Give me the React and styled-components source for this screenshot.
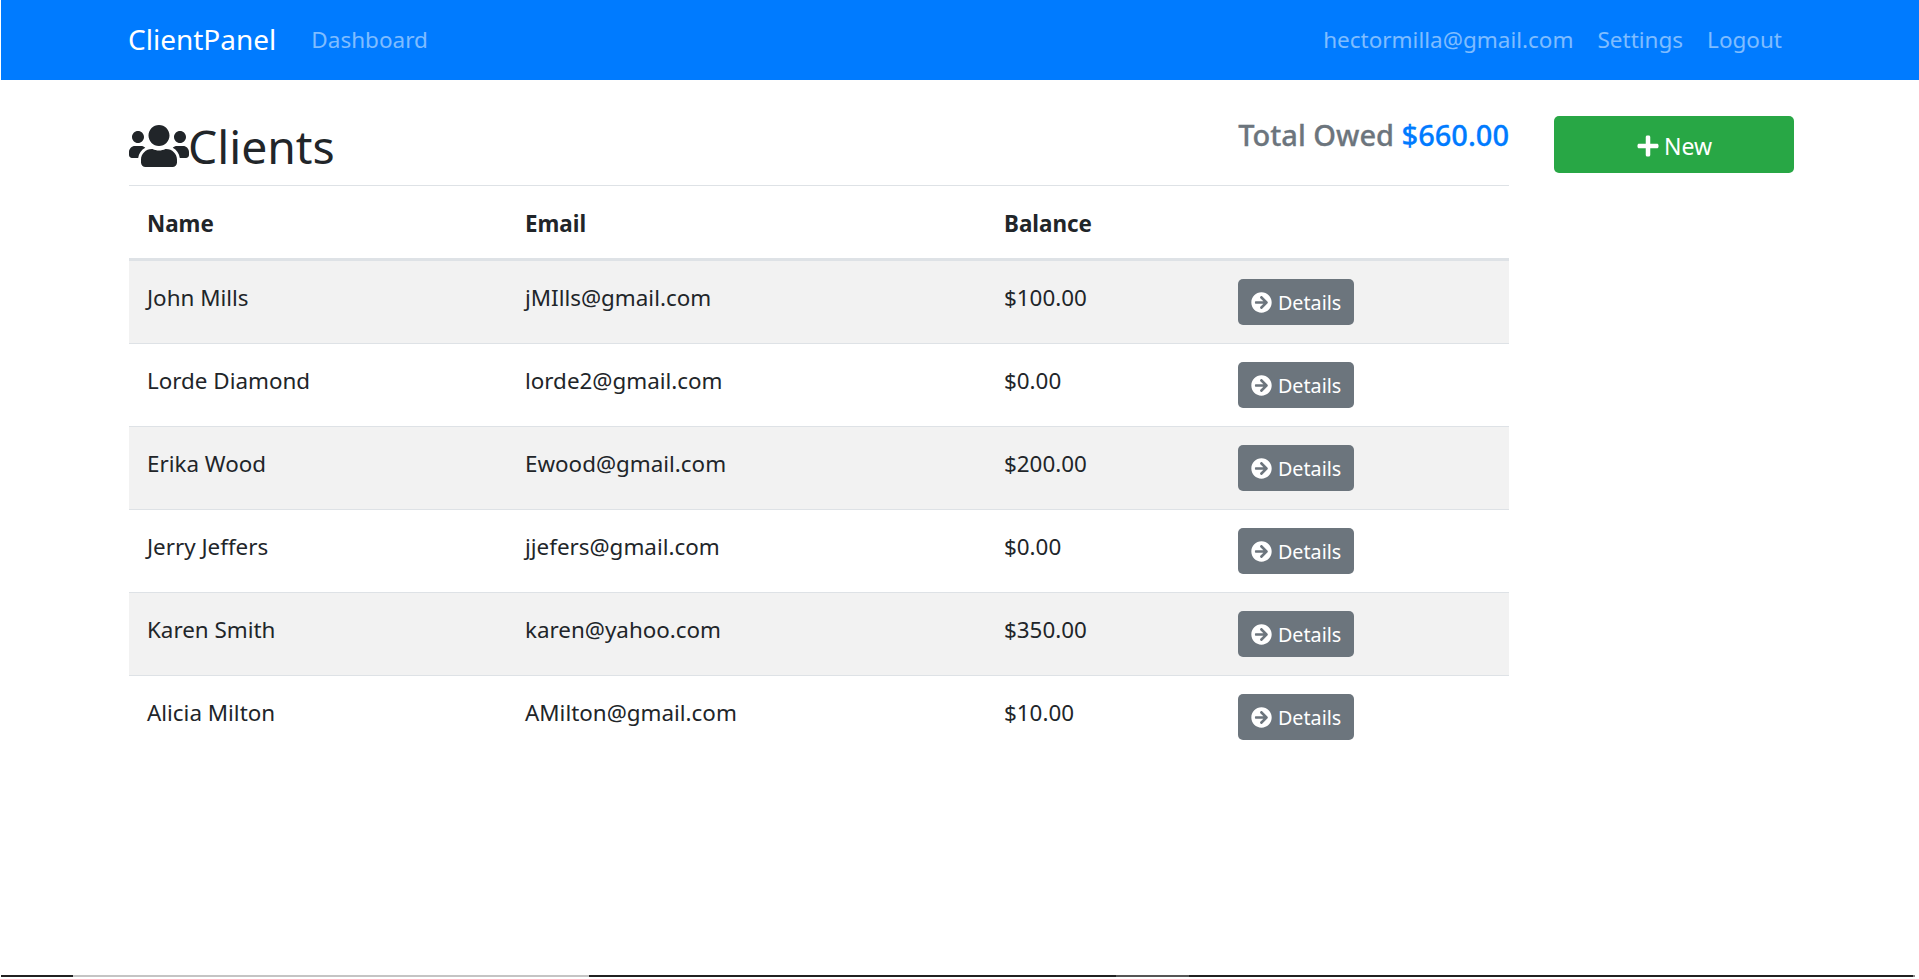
import React from 'react';
import styled, { createGlobalStyle } from 'styled-components';
import { FaUsers, FaPlus, FaArrowCircleRight } from 'react-icons/fa';

const GlobalStyle = createGlobalStyle`
    html, body {
        margin: 0;
        padding: 0;
        background: #fff;
    }
    body {
        font-family: "Noto Sans", "Open Sans", sans-serif;
        font-size: 20px;
        color: #212529;
        height: 979px;
        overflow: hidden;
    }
`

const Page = styled.div`
    display: flex;
    flex-direction: column;
    height: 979px;
`

const Nav = styled.nav`
    display: flex;
    align-items: center;
    height: 78px;
    margin-left: 1px;
    padding: 0 129px 2px 127px;
    background-color: #007bff;
`

const Brand = styled.a`
    color: #fff;
    font-size: 28px;
    margin-right: 35px;
`

const NavLink = styled.a`
    color: rgba(255, 255, 255, 0.5);
    font-size: 22.5px;
    margin-right: ${props => props.$gap || 0}px;
`

const Spacer = styled.div`
    flex: 1;
`

const Main = styled.main`
    flex: 1;
    display: flex;
    align-items: flex-start;
    padding: 0 125px 0 129px;
`

const Content = styled.div`
    width: 1380px;
    padding-top: 36px;
`

const Header = styled.div`
    display: flex;
    justify-content: space-between;
    height: 69px;
`

const Title = styled.h2`
    display: flex;
    align-items: center;
    margin: 0;
    height: 60px;
    font-size: 46.3px;
    font-weight: 400;
    svg {
        width: 60px;
        height: 48px;
        margin-right: -1px;
    }
`

const Total = styled.h5`
    margin: 0;
    font-size: 29px;
    font-weight: 500;
    -webkit-text-stroke: 0.3px currentColor;
    color: #6c757d;
    line-height: 38px;
`

const Amount = styled.span`
    color: #007bff;
`

const Table = styled.table`
    width: 100%;
    border-collapse: separate;
    border-spacing: 0;
    table-layout: fixed;
    font-size: 22.4px;
    th {
        box-sizing: border-box;
        text-align: left;
        font-weight: 700;
        height: 76px;
        padding: 2px 18px 0;
        border-top: 1px solid #dee2e6;
        border-bottom: 3px solid #dee2e6;
    }
    td {
        box-sizing: border-box;
        height: 83px;
        padding: 21px 18px 0;
        vertical-align: top;
        border-bottom: 1px solid #dee2e6;
    }
    tbody tr:nth-child(odd) {
        background: #f2f2f2;
    }
    tbody tr:last-child td {
        border-bottom: 0;
    }
`

const ActionCell = styled.td`
    && {
        padding-top: 18px;
    }
`

const DetailsButton = styled.a`
    display: inline-flex;
    align-items: center;
    gap: 6px;
    height: 46px;
    box-sizing: border-box;
    padding: 1px 13px 0 13px;
    color: #fff;
    font-size: 19.7px;
    background: #6c757d;
    border-radius: 5px;
    svg {
        width: 21px;
        height: 21px;
    }
`

const Side = styled.aside`
    width: 240px;
    margin-left: 45px;
    padding-top: 36px;
`

const NewButton = styled.a`
    display: flex;
    align-items: center;
    justify-content: center;
    gap: 4px;
    height: 57px;
    box-sizing: border-box;
    padding-top: 2px;
    color: #fff;
    font-size: 23px;
    background: #28a745;
    border-radius: 5px;
    svg {
        width: 24px;
        height: 24px;
    }
`

const BottomEdge = styled.div`
    display: flex;
    height: 2px;
    margin: 0 0 2px 1px;
`

const Edge = styled.div`
    width: ${props => props.$w}px;
    background: ${props => props.$color};
`

const clients = [
    { id: 1, name: 'John Mills', email: 'jMIlls@gmail.com', balance: '$100.00' },
    { id: 2, name: 'Lorde Diamond', email: 'lorde2@gmail.com', balance: '$0.00' },
    { id: 3, name: 'Erika Wood', email: 'Ewood@gmail.com', balance: '$200.00' },
    { id: 4, name: 'Jerry Jeffers', email: 'jjefers@gmail.com', balance: '$0.00' },
    { id: 5, name: 'Karen Smith', email: 'karen@yahoo.com', balance: '$350.00' },
    { id: 6, name: 'Alicia Milton', email: 'AMilton@gmail.com', balance: '$10.00' },
];

export default function App() {
    return (
        <Page>
            <GlobalStyle />
            <Nav>
                <Brand>ClientPanel</Brand>
                <NavLink>Dashboard</NavLink>
                <Spacer />
                <NavLink $gap={24}>hectormilla@gmail.com</NavLink>
                <NavLink $gap={24}>Settings</NavLink>
                <NavLink $gap={8}>Logout</NavLink>
            </Nav>
            <Main>
                <Content>
                    <Header>
                        <Title><FaUsers />Clients</Title>
                        <Total>Total Owed <Amount>$660.00</Amount></Total>
                    </Header>
                    <Table>
                        <colgroup>
                            <col style={{ width: 378 }} />
                            <col style={{ width: 479 }} />
                            <col style={{ width: 234 }} />
                            <col />
                        </colgroup>
                        <thead>
                            <tr>
                                <th>Name</th>
                                <th>Email</th>
                                <th>Balance</th>
                                <th></th>
                            </tr>
                        </thead>
                        <tbody>
                            {clients.map(client => (
                                <tr key={client.id}>
                                    <td>{client.name}</td>
                                    <td>{client.email}</td>
                                    <td>{client.balance}</td>
                                    <ActionCell>
                                        <DetailsButton><FaArrowCircleRight />Details</DetailsButton>
                                    </ActionCell>
                                </tr>
                            ))}
                        </tbody>
                    </Table>
                </Content>
                <Side>
                    <NewButton><FaPlus />New</NewButton>
                </Side>
            </Main>
            <BottomEdge>
                <Edge $w={72} $color="#212121" />
                <Edge $w={516} $color="#c4c4c4" />
                <Edge $w={527} $color="#212121" />
                <Edge $w={73} $color="#555" />
                <Edge $w={724} $color="#212121" />
                <Edge $w={2} $color="#888" />
            </BottomEdge>
        </Page>
    )
}
